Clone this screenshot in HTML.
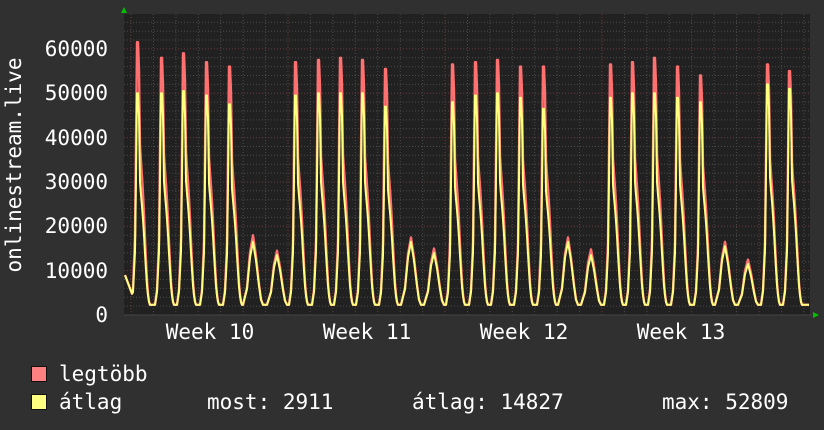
<!DOCTYPE html>
<html><head><meta charset="utf-8"><style>
html,body{margin:0;padding:0;background:#303030;}
body{width:824px;height:430px;overflow:hidden;position:relative;font-family:"DejaVu Sans Mono","Liberation Mono",monospace;color:#fff;}
svg{position:absolute;left:0;top:0}
text{font-family:"DejaVu Sans Mono","Liberation Mono",monospace;fill:#fff;font-size:21px}
</style></head><body>
<svg id="s" width="824" height="430" xmlns="http://www.w3.org/2000/svg">
<rect x="124" y="14" width="686" height="301" fill="#212121"/>
<g id="grid"></g>
<path id="mx" fill="none" stroke="#ff7070" stroke-width="2.4" stroke-linejoin="round"/>
<path id="av" fill="none" stroke="#ffff80" stroke-width="2" stroke-linejoin="round"/>
<line x1="124" y1="315" x2="812" y2="315" stroke="#444" stroke-width="1"/>
<polygon points="124,7 121,13 127,13" fill="#00c000"/>
<polygon points="819,315 813,312 813,318" fill="#00c000"/>
<g text-anchor="end">
<text x="108" y="56">60000</text>
<text x="108" y="100">50000</text>
<text x="108" y="145">40000</text>
<text x="108" y="189">30000</text>
<text x="108" y="233">20000</text>
<text x="108" y="278">10000</text>
<text x="108" y="322">0</text>
</g>
<g text-anchor="middle">
<text x="210" y="339">Week 10</text>
<text x="367" y="339">Week 11</text>
<text x="524" y="339">Week 12</text>
<text x="681" y="339">Week 13</text>
</g>
<text transform="translate(21,165) rotate(-90)" text-anchor="middle">onlinestream.live</text>
<rect x="31.5" y="366.5" width="15" height="15" fill="#ff8080" stroke="#111"/>
<rect x="31.5" y="394.5" width="15" height="15" fill="#ffff80" stroke="#111"/>
<text x="59" y="381">legtöbb</text>
<text x="59" y="409">átlag</text>
<text x="207" y="409">most: 2911</text>
<text x="412" y="409">átlag: 14827</text>
<text x="662" y="409">max: 52809</text>
</svg>
<script>
var g=document.getElementById('grid'),h='';
for(var v=2000;v<=66000;v+=2000){var y=315-v*0.004435;if(y<14)break;var maj=v%10000==0;
h+='<line x1="124" x2="810" y1="'+y.toFixed(1)+'" y2="'+y.toFixed(1)+'" stroke="'+(maj?'#6a3a3a':'#4a4a4a')+'" stroke-dasharray="1,2"/>';}
for(var x=131;x<810;x+=22.43){var d=Math.round((x-131)/22.43);var maj=d%7==0;
h+='<line y1="14" y2="315" x1="'+x.toFixed(1)+'" x2="'+x.toFixed(1)+'" stroke="'+(maj?'#6a3a3a':'#4a4a4a')+'" stroke-dasharray="1,2"/>';}
g.innerHTML=h;
var P=[[61500,50000],[58000,50000],[59000,50500],[57000,49500],[56000,47500],[18000,16500],[14500,13500],
[57000,49500],[57500,50000],[58000,50000],[57500,50000],[55500,47000],[17500,16500],[15000,14000],
[56500,48000],[57000,49500],[57500,50000],[56000,49000],[56000,46500],[17500,16500],[14800,13500],
[56500,49000],[57000,50000],[58000,50000],[56000,49000],[54000,48000],[16500,15500],[12500,11500],
[56500,52000],[55000,51000]];
var X=[138,162,184,207,230,253,277,296,319,341,363,386,411,434,453,476,498,521,544,568,591,611,633,655,678,701,725,748,768,790];
function shape(o,pk,we,k){
 var pts=we?[[-10,0],[-6,0.25],[-3,0.75],[0,1],[3,0.7],[6,0.3],[8,0.08],[10,0]]
 :[[-7,0],[-5,0.06],[-3,0.25],[-2,0.6],[-1,1],[0.5,1],[1.2,0.85],[2,0.58],[3,0.52],[4.5,0.44],[6,0.33],[7.5,0.2],[9,0.09],[10.5,0.02],[12,0]];
 if(o<=pts[0][0]||o>=pts[pts.length-1][0])return 0;
 for(var i=1;i<pts.length;i++)if(o<=pts[i][0]){var a=pts[i-1],b=pts[i];var f=(a[1]+(b[1]-a[1])*(o-a[0])/(b[0]-a[0]));
  if(k==0&&!we&&f<0.8)f=f*1.05;return pk*f;}
 return 0;}
function ser(k){var d='';for(var x=125;x<=809;x+=1){var v=2300;
 if(x<136)v=Math.max(v,9000-(x-125)*600);
 for(var i=0;i<X.length;i++){var we=P[i][0]<30000;var pk=P[i][k]-2300;var s=shape(x-X[i],pk,we,k);if(s+2300>v)v=s+2300;}
 var y=315-v*0.004435;d+=(d?'L':'M')+x+','+y.toFixed(1);}return d;}
document.getElementById('mx').setAttribute('d',ser(0));
document.getElementById('av').setAttribute('d',ser(1));
</script>
</body></html>
